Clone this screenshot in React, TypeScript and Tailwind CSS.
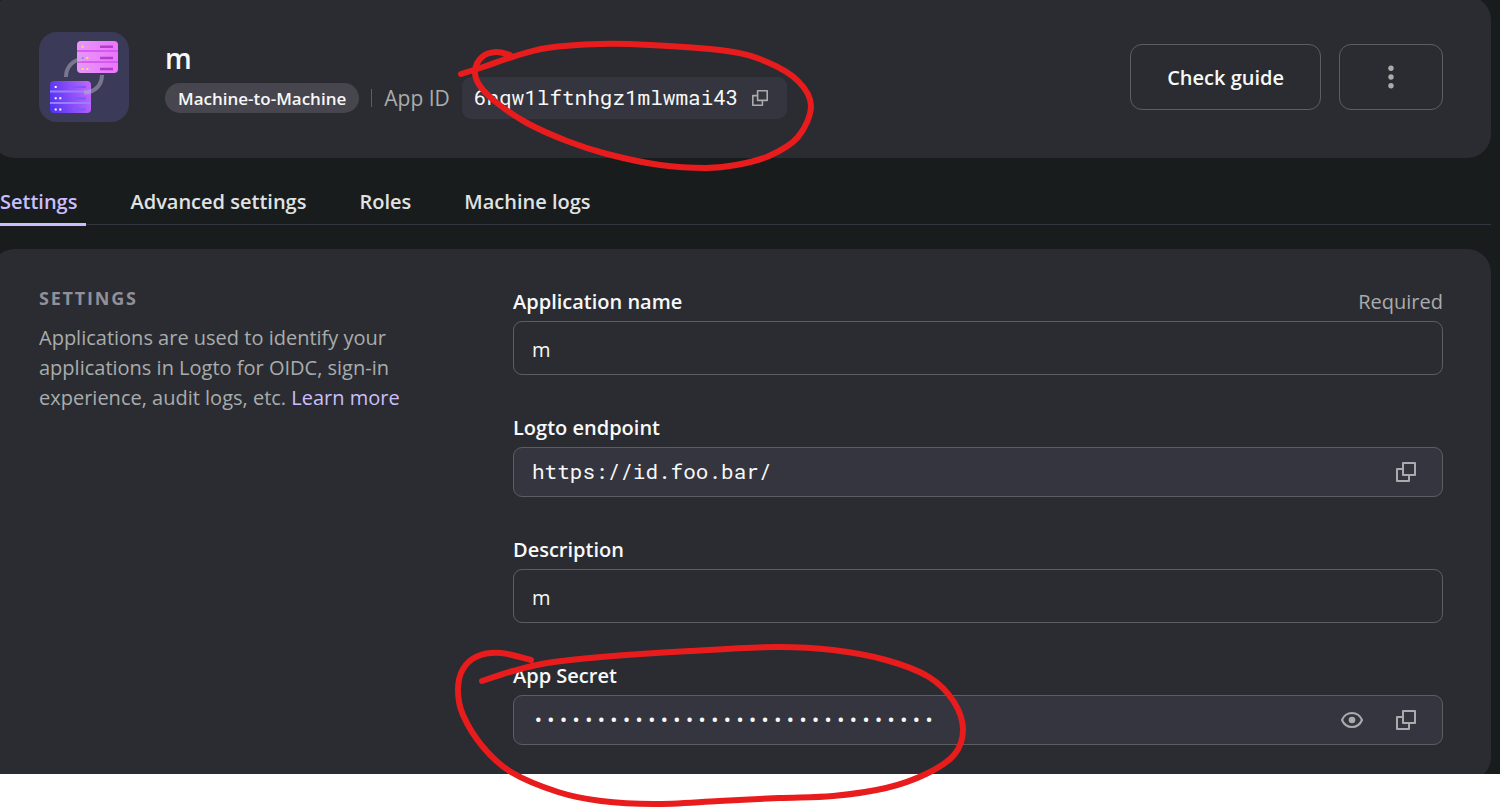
import React from "react";

type Point = [number, number];

/** Turns a list of points into a smooth freehand curve. */
function smoothPath(points: Point[]): string {
  let d = `M${points[0][0]} ${points[0][1]}`;
  for (let i = 0; i < points.length - 1; i++) {
    const a = points[Math.max(i - 1, 0)];
    const b = points[i];
    const c = points[i + 1];
    const e = points[Math.min(i + 2, points.length - 1)];
    d += `C${b[0] + (c[0] - a[0]) / 6} ${b[1] + (c[1] - a[1]) / 6} ${c[0] - (e[0] - b[0]) / 6} ${c[1] - (e[1] - b[1]) / 6} ${c[0]} ${c[1]}`;
  }
  return d;
}

const idMark: Point[] = [
  [461, 74], [486, 66], [512, 57], [547, 48], [600, 44], [650, 45], [727, 51], [767, 62],
  [798, 81], [811, 106], [798, 137], [769, 156], [736, 165], [706, 168], [660, 165],
  [607, 154], [567, 141], [527, 123], [497, 103], [480, 86], [475, 71], [482, 57], [496, 52], [510, 55],
];

const secretMark: Point[] = [
  [482, 681], [513, 671], [547, 663], [601, 657], [690, 651], [776, 647], [833, 650], [886, 660],
  [929, 677], [954, 702], [963, 730], [954, 755], [926, 774], [886, 788], [833, 796], [779, 798],
  [719, 801], [654, 804], [601, 801], [558, 792], [511, 772], [483, 747], [463, 715], [458, 690],
  [463, 669], [478, 656], [501, 653], [531, 660],
];

function Annotations() {
  return (
    <svg
      className="pointer-events-none absolute top-0 left-0"
      width="1000"
      height="811"
      fill="none"
      stroke="#e81c1c"
      strokeWidth="6"
      strokeLinecap="round"
      strokeLinejoin="round"
      aria-hidden="true"
    >
      <path d={smoothPath(idMark)} />
      <path d={smoothPath(secretMark)} />
    </svg>
  );
}

function MachineIcon() {
  return (
    <svg className="size-[90px] shrink-0" viewBox="0 0 90 90" fill="none" aria-hidden="true">
      <defs>
        <linearGradient id="pink" x1="38" y1="25" x2="79" y2="25" gradientUnits="userSpaceOnUse">
          <stop stopColor="#e896fb" />
          <stop offset="1" stopColor="#ec74fb" />
        </linearGradient>
        <linearGradient id="violet" x1="11" y1="70" x2="52" y2="60" gradientUnits="userSpaceOnUse">
          <stop stopColor="#5233f5" />
          <stop offset="1" stopColor="#c065fb" />
        </linearGradient>
      </defs>
      <rect width="90" height="90" rx="18" fill="#3b3b59" />
      <rect x="38" y="9" width="41" height="32" rx="4" fill="url(#pink)" />
      <path d="M38 19h41M38 30h41" stroke="#d55af0" strokeWidth="2" />
      <path d="M61 14.7h13M61 26h13M61 37h13" stroke="#ae3fc9" strokeWidth="2.4" />
      <path d="M42.7 14.7h2M47.3 26h2M42.7 37h2M47.3 37h2" stroke="#fbdc6a" strokeWidth="2" />
      <path d="M42.7 26h2" stroke="#8a7ff0" strokeWidth="2" />
      <rect x="11" y="49" width="41" height="32" rx="4" fill="url(#violet)" />
      <path d="M11 59.5h41M11 71h41" stroke="#9580ff" strokeWidth="2.2" />
      <path d="M34 55h13M34 66.3h13M34 77.5h13" stroke="#7a58fb" strokeWidth="2.2" />
      <path d="M15.7 55h2M15.7 66.3h2M20.3 66.3h2M15.7 77.5h2M20.3 77.5h2" stroke="#fff" strokeWidth="2" />
      <path d="M27 45c0-10 7-17.500 16-17.500" stroke="#b8b4c4" strokeOpacity=".5" strokeWidth="4" />
      <path d="M63 43c0 10-7 17.500-18 17.500" stroke="#b8b4c4" strokeOpacity=".5" strokeWidth="4" />
    </svg>
  );
}

function CopyIcon({ className }: { className: string }) {
  return (
    <svg className={className} viewBox="0 0 20 20" fill="none" stroke="#a9acac" strokeWidth="2" strokeLinejoin="round" aria-hidden="true">
      <rect x="7" y="1" width="12" height="12" />
      <path d="M7 7H1v12h12v-6" />
    </svg>
  );
}

function EyeIcon() {
  return (
    <svg className="h-4 w-[22px]" viewBox="0 0 22 16" fill="none" aria-hidden="true">
      <path d="M1 8C2.800 3.800 6.600 1 11 1s8.200 2.800 10 7c-1.800 4.200-5.600 7-10 7S2.800 12.200 1 8Z" stroke="#a9acac" strokeWidth="2" strokeLinejoin="round" />
      <circle cx="11" cy="8" r="3.300" fill="#a9acac" />
    </svg>
  );
}

function Label({ htmlFor, children }: { htmlFor: string; children: React.ReactNode }) {
  return (
    <label htmlFor={htmlFor} className="text-[20px] leading-[34px] font-semibold text-[#f7f8f8]">
      {children}
    </label>
  );
}

const inputClass =
  "h-[54px] w-full rounded-[9px] border border-[#5c5f60] bg-transparent px-[18px] pt-0.5 text-[20px] text-[#f7f8f8] outline-none";
const copyBoxClass =
  "flex h-[50px] items-center rounded-[9px] border border-[#5c5f60] bg-[#34353f] pr-[26px] pl-[18px]";
const monoClass = "font-['Roboto_Mono','Liberation_Mono',monospace]";

const tabs = ["Settings", "Advanced settings", "Roles", "Machine logs"];

export default function App() {
  return (
    <div className="relative min-h-[811px] overflow-hidden bg-white font-['Segoe_UI','Open_Sans',sans-serif] text-[20px] text-[#f7f8f8]">
      <main className="overflow-hidden bg-[#191c1d]">
        <div className="-mt-1 mr-[9px] -mb-[7px] -ml-[9px]">
          <header className="flex items-center gap-9 rounded-3xl bg-[#2b2c31] px-12 py-9">
            <MachineIcon />
            <div className="min-w-0 flex-1">
              <h1 className="h-[42px] text-[28px] leading-[46px] font-semibold">m</h1>
              <div className="flex items-center gap-3">
                <span className="h-[30px] rounded-full bg-[#47464e] px-[13px] text-[17px] leading-8 font-semibold whitespace-nowrap">
                  Machine-to-Machine
                </span>
                <span className="h-[18px] w-px bg-[#5c5f60]" />
                <span className="pt-0.5 text-[21px] whitespace-nowrap text-[#a9acac]">App ID</span>
                <div className="flex h-[42px] items-center gap-3.5 rounded-[9px] bg-[#34353f] pr-[19px] pl-3">
                  <span className={`${monoClass} text-[21px]`}>6nqw1lftnhgz1mlwmai43</span>
                  <button type="button" aria-label="Copy app ID">
                    <CopyIcon className="size-4" />
                  </button>
                </div>
              </div>
            </div>
            <div className="flex gap-[18px]">
              <button type="button" className="h-[66px] rounded-xl border border-[#5c5f60] px-9 pt-0.5 font-semibold whitespace-nowrap">
                Check guide
              </button>
              <button type="button" aria-label="More actions" className="flex h-[66px] w-[104px] items-center justify-center rounded-xl border border-[#5c5f60]">
                <svg className="h-6 w-1.5" viewBox="0 0 6 24" fill="#a9acac" aria-hidden="true">
                  <circle cx="3" cy="3.300" r="2.700" />
                  <circle cx="3" cy="12" r="2.700" />
                  <circle cx="3" cy="20.700" r="2.700" />
                </svg>
              </button>
            </div>
          </header>

          <nav className="mt-[18px] mb-6 flex gap-[35px] border-b border-[#34353f]">
            {tabs.map((tab, i) => (
              <a
                key={tab}
                href="#"
                className={
                  i === 0
                    ? "-mb-0.5 border-b-3 border-[#cabeff] px-[9px] pt-[11px] pb-1.5 leading-[30px] font-semibold text-[#cabeff]"
                    : "px-[9px] pt-[11px] leading-[30px] font-semibold text-[#e0e3e3]"
                }
              >
                {tab}
              </a>
            ))}
          </nav>

          <section className="grid grid-cols-[474px_1fr] rounded-3xl bg-[#2b2c31] px-12 py-9">
            <div className="max-w-[370px]">
              <h2 className="text-[18px] leading-[26px] font-bold tracking-widest text-[#928f9a]">SETTINGS</h2>
              <p className="mt-3 leading-[30px] text-[#a9acac]">
                Applications are used to identify your applications in Logto for OIDC, sign-in experience, audit logs, etc.{" "}
                <a href="#" className="text-[#cabeff]">Learn more</a>
              </p>
            </div>
            <form className="flex flex-col gap-9">
              <div className="flex flex-col gap-0.5">
                <div className="flex justify-between">
                  <Label htmlFor="name">Application name</Label>
                  <span className="leading-[34px] text-[#a9acac]">Required</span>
                </div>
                <input id="name" className={inputClass} defaultValue="m" />
              </div>
              <div className="flex flex-col gap-0.5">
                <Label htmlFor="endpoint">Logto endpoint</Label>
                <div className={copyBoxClass}>
                  <input id="endpoint" readOnly value="https://id.foo.bar/" className={`${monoClass} min-w-0 flex-1 bg-transparent text-[21px] outline-none`} />
                  <button type="button" aria-label="Copy endpoint">
                    <CopyIcon className="size-5" />
                  </button>
                </div>
              </div>
              <div className="flex flex-col gap-0.5">
                <Label htmlFor="description">Description</Label>
                <input id="description" className={inputClass} defaultValue="m" />
              </div>
              <div className="flex flex-col gap-0.5">
                <Label htmlFor="secret">App Secret</Label>
                <div className={copyBoxClass}>
                  <input id="secret" readOnly value="••••••••••••••••••••••••••••••••" className={`${monoClass} min-w-0 flex-1 bg-transparent text-[21px] outline-none`} />
                  <button type="button" aria-label="Show secret" className="mr-[33px]">
                    <EyeIcon />
                  </button>
                  <button type="button" aria-label="Copy secret">
                    <CopyIcon className="size-5" />
                  </button>
                </div>
              </div>
            </form>
          </section>
        </div>
      </main>
      <Annotations />
    </div>
  );
}
